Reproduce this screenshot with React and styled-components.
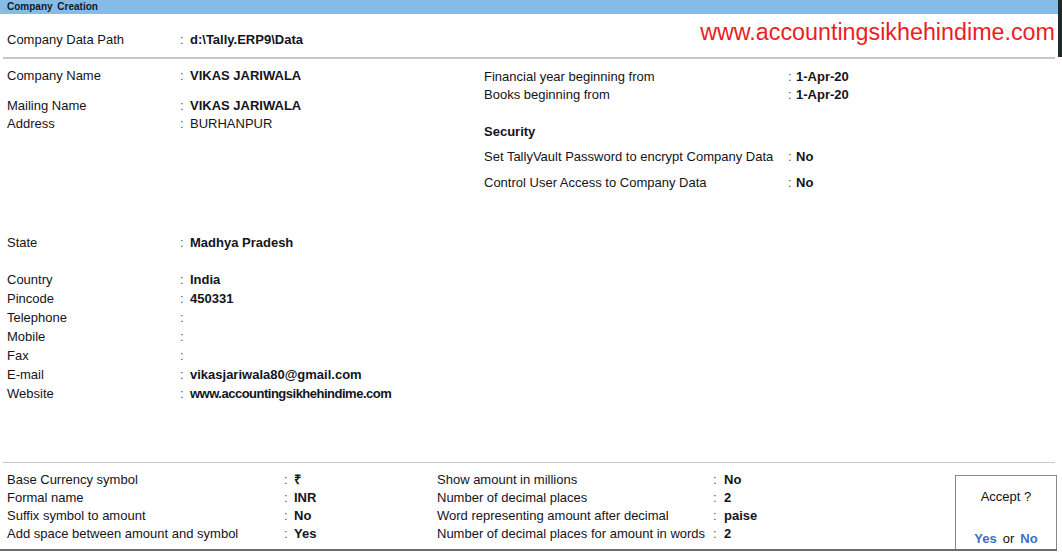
import styled, { createGlobalStyle } from "styled-components";

const Global = createGlobalStyle`
  html, body {
    margin: 0;
    padding: 0;
    background: #fff;
  }
  body {
    font-family: "Liberation Sans", Arial, sans-serif;
    font-size: 13px;
    color: #14141c;
  }
`;

const Screen = styled.div`
  width: 1062px;
  height: 554px;
  overflow: hidden;
  background: #fff;
`;

const Top = styled.div`
  height: 57px;
  border-right: 4px solid #1c2a2a;
  display: flex;
  flex-direction: column;
`;

const TitleBar = styled.div`
  height: 14px;
  background: #86bbe5;
  padding-left: 7px;
  font-size: 10px;
  font-weight: 700;
  line-height: 14px;
  color: #0f1a26;
  word-spacing: 2px;
`;

const PathRow = styled.div`
  flex: 1;
  display: flex;
  justify-content: space-between;
  align-items: flex-start;
  padding: 0 3px 0 7px;
`;

const Watermark = styled.div`
  margin-top: 5px;
  font-size: 23.3px;
  line-height: 26px;
  color: #ee1c25;
  white-space: nowrap;
`;

const Rule = styled.div`
  margin: 0 7px 0 3px;
  height: ${(p) => p.$h || 1}px;
  background: #c8c8c8;
`;

const Main = styled.div`
  height: 403px;
  display: flex;
  padding-left: 7px;
`;

const Column = styled.div`
  width: ${(p) => p.$w}px;
  padding-top: ${(p) => p.$pt}px;
  display: flex;
  flex-direction: column;
`;

const Row = styled.div`
  display: flex;
  align-items: center;
  height: ${(p) => p.$h || 19}px;
  margin-top: ${(p) => p.$mt || 0}px;
  white-space: nowrap;
`;

const Label = styled.span`
  width: ${(p) => p.$w}px;
  flex: none;
`;

const Colon = styled.span`
  width: ${(p) => p.$w || 10}px;
  flex: none;
  color: #555;
`;

const Value = styled.span`
  font-weight: ${(p) => (p.$bold ? 700 : 400)};
  letter-spacing: ${(p) => p.$ls || 0}px;
`;

const Heading = styled.div`
  height: 18px;
  line-height: 18px;
  margin-top: ${(p) => p.$mt}px;
  font-weight: 700;
`;

const Footer = styled.div`
  width: 1057px;
  height: 86px;
  display: flex;
  align-items: flex-end;
  border-bottom: 2px solid #6c6c6c;
`;

const Currency = styled.div`
  flex: 1;
  align-self: stretch;
  display: grid;
  grid-template-columns: 430px 1fr;
  padding: 7px 0 0 7px;
`;

const AcceptBox = styled.div`
  width: 102px;
  height: 74px;
  border: 1px solid #8a8a8a;
  border-bottom: none;
  display: flex;
  flex-direction: column;
  align-items: center;
  justify-content: space-between;
  padding: 12px 0 1px;
  box-sizing: border-box;
`;

const AcceptText = styled.div`
  line-height: 18px;
  color: #111;
`;

const Choice = styled.span`
  color: #3b6fc2;
  font-weight: 700;
`;

const Or = styled.span`
  margin: 0 6px;
`;

const left = [
  { label: "Company Name", value: "VIKAS JARIWALA", bold: true, mt: 0 },
  { label: "Mailing Name", value: "VIKAS JARIWALA", bold: true, mt: 11 },
  { label: "Address", value: "BURHANPUR", mt: -1 },
  { label: "State", value: "Madhya Pradesh", bold: true, mt: 100 },
  { label: "Country", value: "India", bold: true, mt: 18 },
  { label: "Pincode", value: "450331", bold: true },
  { label: "Telephone", value: "" },
  { label: "Mobile", value: "" },
  { label: "Fax", value: "" },
  { label: "E-mail", value: "vikasjariwala80@gmail.com", bold: true },
  { label: "Website", value: "www.accountingsikhehindime.com", bold: true, ls: -0.5 },
];

const currencyA = [
  ["Base Currency symbol", "₹"],
  ["Formal name", "INR"],
  ["Suffix symbol to amount", "No"],
  ["Add space between amount and symbol", "Yes"],
];

const currencyB = [
  ["Show amount in millions", "No"],
  ["Number of decimal places", "2"],
  ["Word representing amount after decimal", "paise"],
  ["Number of decimal places for amount in words", "2"],
];

function App() {
  return (
    <Screen>
      <Global />
      <Top>
        <TitleBar>Company Creation</TitleBar>
        <PathRow>
          <Row style={{ marginTop: 16 }}>
            <Label $w={173}>Company Data Path</Label>
            <Colon>:</Colon>
            <Value $bold>d:\Tally.ERP9\Data</Value>
          </Row>
          <Watermark>www.accountingsikhehindime.com</Watermark>
        </PathRow>
      </Top>
      <Rule $h={2} />
      <Main>
        <Column $w={477} $pt={7}>
          {left.map((r) => (
            <Row key={r.label} $mt={r.mt}>
              <Label $w={173}>{r.label}</Label>
              <Colon>:</Colon>
              <Value $bold={r.bold} $ls={r.ls}>{r.value}</Value>
            </Row>
          ))}
        </Column>
        <Column $w={560} $pt={8}>
          <Row $h={18}>
            <Label $w={304}>Financial year beginning from</Label>
            <Colon $w={8}>:</Colon>
            <Value $bold>1-Apr-20</Value>
          </Row>
          <Row $h={18}>
            <Label $w={304}>Books beginning from</Label>
            <Colon $w={8}>:</Colon>
            <Value $bold>1-Apr-20</Value>
          </Row>
          <Heading $mt={20}>Security</Heading>
          <Row $h={18} $mt={6}>
            <Label $w={304}>Set TallyVault Password to encrypt Company Data</Label>
            <Colon $w={8}>:</Colon>
            <Value $bold>No</Value>
          </Row>
          <Row $h={18} $mt={8}>
            <Label $w={304}>Control User Access to Company Data</Label>
            <Colon $w={8}>:</Colon>
            <Value $bold>No</Value>
          </Row>
        </Column>
      </Main>
      <Rule />
      <Footer>
        <Currency>
          <div>
            {currencyA.map(([l, v]) => (
              <Row key={l} $h={18}>
                <Label $w={277}>{l}</Label>
                <Colon>:</Colon>
                <Value $bold>{v}</Value>
              </Row>
            ))}
          </div>
          <div>
            {currencyB.map(([l, v]) => (
              <Row key={l} $h={18}>
                <Label $w={276}>{l}</Label>
                <Colon $w={11}>:</Colon>
                <Value $bold>{v}</Value>
              </Row>
            ))}
          </div>
        </Currency>
        <AcceptBox>
          <AcceptText>Accept ?</AcceptText>
          <AcceptText>
            <Choice>Yes</Choice>
            <Or>or</Or>
            <Choice>No</Choice>
          </AcceptText>
        </AcceptBox>
      </Footer>
    </Screen>
  );
}

export default App;
